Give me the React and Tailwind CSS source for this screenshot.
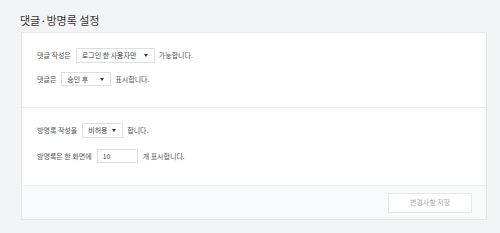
import React from 'react';

const font = { fontFamily: '"Noto Sans CJK KR", "Noto Sans", sans-serif' };

const Select = ({ value, width, h = 'h-[14px]' }) => (
	<div className={`flex ${h} ${width} items-center justify-between border border-[#dcdfe3] bg-white pl-[5px] pr-[6px] text-[7px] text-[#444]`}>
		<span>{value}</span>
		<svg width="4" height="3" viewBox="0 0 4 3">
			<path d="M0 0h4L2 3z" fill="#333" />
		</svg>
	</div>
);

const App = () => {
	return (
		<div className="min-h-[233px] bg-[#f3f4f6] pl-[20px] text-[#555]" style={font}>
			<div className="pt-[13px] text-[11px] font-normal leading-[14px] text-[#333]">댓글·방명록 설정</div>

			<div className="ml-[1px] mt-[5px] w-[466px] border border-[#e4e6e9] bg-white">
				<section className="flex flex-col gap-[10px] border-b border-[#eceef0] pb-[21px] pl-[15px] pt-[15px] text-[7px]">
					<div className="flex h-[14px] items-center">
						<span className="mr-[5px]">댓글 작성은</span>
						<Select value="로그인 한 사용자만" width="w-[79px]" h="h-[15px]" />
						<span className="ml-[4px]">가능합니다.</span>
					</div>
					<div className="flex h-[14px] items-center">
						<span className="mr-[5px]">댓글은</span>
						<Select value="승인 후" width="w-[50px]" />
						<span className="ml-[4px]">표시합니다.</span>
					</div>
				</section>

				<section className="flex flex-col gap-[11px] pb-[22px] pl-[15px] pt-[15px] text-[7px]">
					<div className="flex h-[15px] items-center">
						<span className="mr-[5px]">방명록 작성을</span>
						<Select value="비허용" width="w-[41px]" h="h-[15px]" />
						<span className="ml-[4px]">합니다.</span>
					</div>
					<div className="flex h-[14px] items-center">
						<span className="mr-[5px]">방명록은 한 화면에</span>
						<div className="flex h-[14px] w-[41px] items-center border border-[#dcdfe3] bg-white pl-[5px] text-[7px] text-[#444]">10</div>
						<span className="ml-[5px]">개 표시합니다.</span>
					</div>
				</section>

				<footer className="flex h-[34px] items-center justify-end border-t border-[#f0f1f3] bg-[#f9fafb] pr-[14px]">
					<button
						type="button"
						className="h-[20px] w-[84px] border border-[#e6e8eb] bg-white text-[7px] text-[#aaa]"
					>
						변경사항 저장
					</button>
				</footer>
			</div>
		</div>
	);
};

export default App;
